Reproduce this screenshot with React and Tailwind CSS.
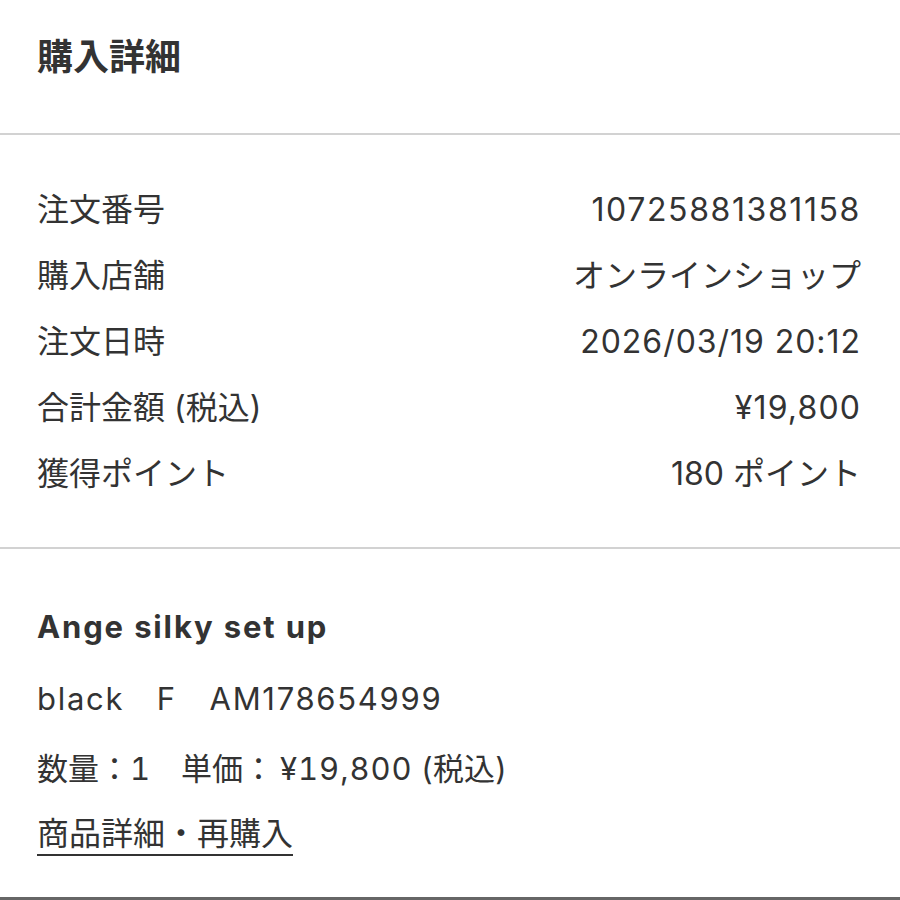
const rows = [
  ["注文番号", "10725881381158", "tracking-[0.05em]"],
  ["購入店舗", "オンラインショップ", ""],
  ["注文日時", "2026/03/19 20:12", "tracking-[0.03em]"],
  ["合計金額 (税込)", "¥19,800", "tracking-[0.035em]"],
  ["獲得ポイント", "180 ポイント", ""],
]

const App = () => {
  return (
    <div
      className="w-[900px] h-[900px] overflow-hidden bg-white text-[#333333]"
      style={{ fontFamily: 'Inter, "Noto Sans CJK JP", sans-serif' }}
    >
      <section className="pl-[37px] pr-[39px] pt-[35px] pb-[54px]">
        <h2 className="text-[36px] font-bold leading-[44px]">購入詳細</h2>
      </section>
      <div className="h-[2px] bg-[#d2d2d2]" />

      <section className="pl-[37px] pr-[39px] pt-[42px] pb-[40px]">
        {rows.map(([label, value, cls]) => (
          <div key={label} className="flex justify-between items-center h-[66px] text-[32px] leading-[66px]">
            <span>{label}</span>
            <span className={cls}>{value}</span>
          </div>
        ))}
      </section>
      <div className="h-[2px] bg-[#d2d2d2]" />

      <section className="pl-[37px] pr-[39px] pt-[58px] pb-[41px]">
        <h3 className="text-[31px] font-bold leading-[40px] tracking-[0.06em]">Ange silky set up</h3>
        <p className="mt-[32px] text-[31px] leading-[40px] tracking-[0.055em]">black　F　AM178654999</p>
        <p className="mt-[30px] text-[31px] leading-[40px] tabular-nums">
          数量：1　単価：<span className="ml-[6px] tracking-[0.03em]">¥19,800</span> (税込)
        </p>
        <div className="mt-[25px]">
          <a className="inline-block text-[32px] leading-[40px] border-b-2 border-[#333333]">
            商品詳細・再購入
          </a>
        </div>
      </section>
      <div className="h-[3px] bg-[#666666]" />
    </div>
  )
}

export default App
